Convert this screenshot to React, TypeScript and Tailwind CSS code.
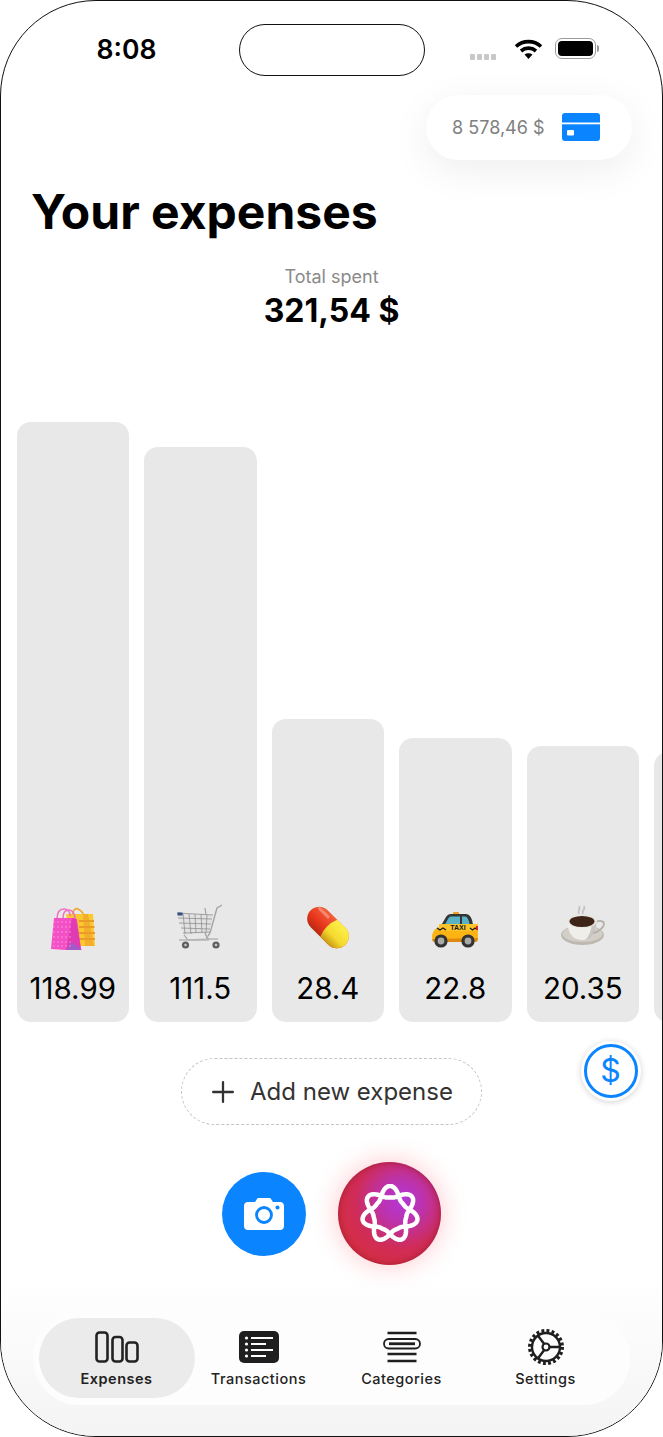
import { Plus } from "lucide-react";

const bars = [
  { value: "118.99", height: 600, icon: <BagsEmoji /> },
  { value: "111.5", height: 575, icon: <CartEmoji /> },
  { value: "28.4", height: 303, icon: <PillEmoji /> },
  { value: "22.8", height: 284, icon: <TaxiEmoji /> },
  { value: "20.35", height: 276, icon: <CoffeeEmoji /> },
  { value: "", height: 270, icon: null },
];

function BagsEmoji() {
  return (
    <svg width="48" height="48" viewBox="0 0 48 48">
      <path d="M23 12c1-7 4-8 6-7s5 3 6 7" fill="none" stroke="#f0a52c" strokeWidth="1.6" />
      <path d="M17 10h27l2 32H22z" fill="#fbc92e" />
      <path d="M34 10h5l6 32h-9z" fill="#f3ae2c" />
      <path d="M30 17h15M30 23h15.500M30 29h16M30 35h16" stroke="#eb9c28" strokeWidth="2" />
      <path d="M8 15c0-8 4-10 7-10s6 2 6 7M14 14c0-6 3-8 6-8s6 3 6 9" fill="none" stroke="#f06ec4" strokeWidth="1.500" />
      <path d="M5 14h19l4 1 4 30-15 1-15-1z" fill="#f450c6" />
      <path d="M23 14l4 1 5 30-15 1z" fill="#e13bb4" />
      <path d="M23 38l-6 8h16z" fill="#a55ac8" />
      <g fill="#fda6e3">
        {[18, 23, 28, 33, 38, 42].flatMap((y) =>
          [5, 9, 13, 17, 21].map((x) => <circle key={`${x}-${y}`} cx={x} cy={y} r="0.7" />)
        )}
      </g>
    </svg>
  );
}

function CartEmoji() {
  return (
    <svg width="48" height="48" viewBox="0 0 48 48" fill="none">
      <path d="M1 9l36 2-3 18-26 2z" fill="#e2e2e2" />
      <g stroke="#8f8f8f" strokeWidth="0.8">
        <path d="M1 9l36 2M2 14l34 1M3 19l32 1M5 24l29 1M7 29l27-1" />
        <path d="M7 9l2 21M13 10l2 20M19 10l1 19M25 10l1 19M31 11l-1 18" />
      </g>
      <rect x="1.500" y="8.500" width="5" height="3" fill="#33507c" />
      <path d="M46 1l-5 3-7 25-2 3" stroke="#a5a5a5" strokeWidth="1.400" />
      <path d="M29 4l1 7M8 31l4 5h20l-3-7M30 31l3 5" stroke="#a0a0a0" strokeWidth="1.200" />
      <path d="M3 36l9 0 23 -1 7 0" stroke="#b5b5b5" strokeWidth="1.600" />
      <circle cx="9.500" cy="41" r="3.600" fill="#5f5f5f" />
      <circle cx="9.500" cy="41" r="1.300" fill="#c8c8c8" />
      <circle cx="40" cy="41" r="3.600" fill="#5f5f5f" />
      <circle cx="40" cy="41" r="1.300" fill="#c8c8c8" />
    </svg>
  );
}

function PillEmoji() {
  return (
    <svg width="48" height="48" viewBox="0 0 48 48">
      <defs>
        <linearGradient id="pillYellow" x1="0" y1="0" x2="0" y2="1">
          <stop offset="0" stopColor="#fdf04a" />
          <stop offset="0.6" stopColor="#f5d92e" />
          <stop offset="1" stopColor="#c99a14" />
        </linearGradient>
        <linearGradient id="pillRed" x1="0" y1="0" x2="0" y2="1">
          <stop offset="0" stopColor="#f2603a" />
          <stop offset="0.6" stopColor="#e8361c" />
          <stop offset="1" stopColor="#b82b12" />
        </linearGradient>
      </defs>
      <g transform="rotate(45 24 23.500)">
        <rect x="-0.500" y="11.500" width="49" height="24" rx="12" fill="url(#pillRed)" />
        <path d="M25 11.500h11.500a12 12 0 0 1 0 24H25q-5-12 0-24z" fill="url(#pillYellow)" />
        <rect x="3" y="14.500" width="15" height="3" rx="1.500" fill="#fff" opacity="0.3" />
      </g>
    </svg>
  );
}

function TaxiEmoji() {
  return (
    <svg width="48" height="48" viewBox="0 0 48 48">
      <rect x="22" y="8" width="6" height="3" rx="1" fill="#e8a21c" />
      <path d="M8 25l7-12c1-2 3-3 5-3h15c3 0 5 3 6 6l2 9z" fill="#353535" />
      <path d="M12 24l5-9c1-2 2-2.500 4-2.500h8V24z" fill="#58b3c6" />
      <path d="M31 12.500h3c2 0 3 2 4 5l1.500 6.500H31z" fill="#58b3c6" />
      <path d="M1 33c0-5 3-9 8-10l35-1c2 0 3 4 3 10 0 3-1 5-3 5H4c-2 0-3-2-3-4z" fill="#fbb413" />
      <path d="M1 35c0 2 1 3 3 3h40c2 0 3-1 3-4z" fill="#e08a0d" />
      <rect x="8" y="20" width="39" height="7" fill="#fbc52a" />
      <text x="27" y="26" textAnchor="middle" fontFamily="Liberation Sans, sans-serif" fontWeight="700" fontSize="7" fill="#1a1a1a">
        TAXI
      </text>
      <path d="M6 24l3 2 3-2 3 2M39 24l2.500 2 2.500-2 2.500 2" stroke="#1a1a1a" strokeWidth="1.200" fill="none" />
      <circle cx="10" cy="37" r="6.600" fill="#333" />
      <circle cx="10" cy="37" r="3.400" fill="#a9a9a9" />
      <circle cx="37" cy="37" r="6.600" fill="#333" />
      <circle cx="37" cy="37" r="3.400" fill="#a9a9a9" />
      <rect x="45" y="22" width="2" height="4" fill="#d22" />
    </svg>
  );
}

function CoffeeEmoji() {
  return (
    <svg width="48" height="48" viewBox="0 0 48 48" fill="none">
      <path d="M20 10c-2-3 2-5 0-8M24 10c-2-3 3-5 1-8" stroke="#c3c3c3" strokeWidth="1.800" />
      <ellipse cx="23.500" cy="31" rx="21.500" ry="10" fill="#bdb9b1" />
      <ellipse cx="23.500" cy="30" rx="20" ry="8" fill="#d3cfc8" />
      <path d="M8.500 17c0 10 4 19 14.500 19s14-9 15-19z" fill="#f0eeea" />
      <path d="M26 36c8-1 11-9 12-19l-5 0c0 8-3 16-7 19z" fill="#c9c6c0" />
      <path d="M37 18c4-2 8-1 8 2s-5 8-11 9" stroke="#b4b1aa" strokeWidth="1.800" />
      <ellipse cx="23" cy="17" rx="15" ry="7" fill="#e8e6e2" />
      <ellipse cx="23" cy="17.500" rx="12.500" ry="5.500" fill="#3f2418" />
    </svg>
  );
}

function Wifi() {
  return (
    <svg width="29" height="22" viewBox="0 0 29 22" fill="none" stroke="#000" strokeWidth="3.600">
      <path d="M2 8.500C9 2 20 2 27 8.500" />
      <path d="M7 13c4.500-3.800 10.500-3.800 15 0" />
      <path d="M14.500 21l-4-4.500c2.300-1.600 5.700-1.600 8 0z" fill="#000" stroke="none" />
    </svg>
  );
}

function Battery() {
  return (
    <div className="flex items-center gap-[1px]">
      <div className="flex h-[21px] w-[41px] items-center justify-center rounded-[7px] border-[1.5px] border-[#9a9a9a] p-[2px]">
        <div className="h-full w-full rounded-[4px] bg-black" />
      </div>
      <div className="h-[7px] w-[2px] rounded-r-full bg-[#9a9a9a]" />
    </div>
  );
}

function CardIcon() {
  return (
    <svg width="38" height="28" viewBox="0 0 38 28">
      <rect width="38" height="28" rx="3" fill="#0a84ff" />
      <rect y="9.500" width="38" height="1.800" fill="#fff" />
      <rect x="5" y="17" width="7" height="5.500" rx="1" fill="#fff" />
    </svg>
  );
}

function CameraIcon() {
  return (
    <svg width="40" height="32" viewBox="0 0 40 32">
      <path
        d="M4 4h7l2-3c.5-.7 1-1 2-1h10c1 0 1.500.3 2 1l2 3h7c2.500 0 4 1.500 4 4v20c0 2.500-1.500 4-4 4H4c-2.500 0-4-1.500-4-4V8c0-2.500 1.500-4 4-4z"
        fill="#fff"
      />
      <circle cx="20" cy="17" r="7.500" fill="none" stroke="#0a84ff" strokeWidth="2.800" />
      <circle cx="33.500" cy="9.500" r="2" fill="#0a84ff" />
    </svg>
  );
}

// rounded {7/2} star, drawn as one closed polar curve
function rosettePath() {
  const points: string[] = [];
  for (let i = 0; i <= 420; i++) {
    const t = (i / 420) * 4 * Math.PI;
    const wave = (Math.cos((7 * t) / 2) + 1) / 2;
    const r = 16.5 + 11.5 * Math.pow(wave, 1.7);
    const a = t - Math.PI / 2;
    points.push(`${(30 + r * Math.cos(a)).toFixed(2)} ${(30 + r * Math.sin(a)).toFixed(2)}`);
  }
  return `M${points.join("L")}Z`;
}

function ExpensesIcon() {
  return (
    <svg width="44" height="32" viewBox="0 0 44 32" fill="none" stroke="#222" strokeWidth="2.600">
      <rect x="1.500" y="1.500" width="11" height="29" rx="3" />
      <rect x="17.500" y="6" width="10" height="24.500" rx="3" />
      <rect x="31.500" y="11.500" width="11" height="19" rx="3" />
    </svg>
  );
}

function TransactionsIcon() {
  return (
    <svg width="40" height="32" viewBox="0 0 40 32">
      <rect width="40" height="32" rx="5" fill="#1f1f1f" />
      <g fill="#fff">
        <circle cx="7.500" cy="7" r="1.600" />
        <circle cx="7.500" cy="13" r="1.600" />
        <circle cx="7.500" cy="19" r="1.600" />
        <circle cx="7.500" cy="25" r="1.600" />
        <rect x="12" y="6" width="22" height="2" />
        <rect x="12" y="12" width="15" height="2" />
        <rect x="12" y="18" width="22" height="2" />
        <rect x="12" y="24" width="15" height="2" />
      </g>
    </svg>
  );
}

function CategoriesIcon() {
  return (
    <svg width="38" height="32" viewBox="0 0 38 32" fill="none" stroke="#1f1f1f">
      <path d="M4.500 2h29M4.500 23h29M4.500 30h29" strokeWidth="2.600" />
      <rect x="1" y="8" width="36" height="9.500" rx="4.750" strokeWidth="1.800" />
      <path d="M6 12.750h26" strokeWidth="2.800" />
    </svg>
  );
}

function SettingsIcon() {
  return (
    <svg width="38" height="38" viewBox="0 0 38 38" fill="none" stroke="#1f1f1f">
      <circle cx="19" cy="19" r="16.300" strokeWidth="3.400" strokeDasharray="2.900 2.220" />
      <circle cx="19" cy="19" r="14" strokeWidth="2.400" />
      <circle cx="19" cy="19" r="3.500" strokeWidth="2.200" />
      <path d="M22.500 19H33M17.200 16 10.500 7M17.200 22 10.500 31" strokeWidth="2.400" />
    </svg>
  );
}

const tabs = [
  { label: "Expenses", icon: <ExpensesIcon />, width: "w-[156px]", active: true },
  { label: "Transactions", icon: <TransactionsIcon />, width: "w-[128px]" },
  { label: "Categories", icon: <CategoriesIcon />, width: "w-[158px]" },
  { label: "Settings", icon: <SettingsIcon />, width: "w-[130px]" },
];

export default function App() {
  return (
    <div className="relative flex h-[1437px] w-[663px] flex-col overflow-hidden rounded-[96px] border-[1.5px] border-[#111] bg-white font-[Inter,sans-serif] text-black">
      {/* STATUS BAR */}
      <div className="mt-[22.5px] flex h-[52px] items-center pl-[95.5px]">
        <span className="w-[142px] text-[26.5px] font-semibold">8:08</span>
        <div className="h-[52px] w-[186px] rounded-full border-[1.5px] border-[#111]" />
        <div className="ml-[45px] flex items-center">
          <div className="mt-[14px] flex gap-[2px]">
            {[0, 1, 2, 3].map((i) => (
              <div key={i} className="h-[6px] w-[5px] rounded-[1px] bg-[#c8c8c8]" />
            ))}
          </div>
          <div className="ml-[18px] mb-[1px]">
            <Wifi />
          </div>
          <div className="ml-[12px] mb-[2px]">
            <Battery />
          </div>
        </div>
      </div>

      {/* BALANCE */}
      <div className="mt-[19px] flex justify-end pr-[30.5px]">
        <div className="flex h-[65px] w-[206px] items-center justify-end gap-[17px] rounded-[33px] bg-white pr-[32px] shadow-[0_10px_40px_rgba(0,0,0,0.07)]">
          <span className="text-[18px] text-[#808080]">8 578,46 $</span>
          <CardIcon />
        </div>
      </div>

      <h1 className="mt-[23px] pl-[30px] text-[48px] leading-[58px] font-bold">Your expenses</h1>

      <div className="mt-[26px] flex flex-col items-center">
        <span className="text-[18px] leading-[20px] text-[#8a8a8a]">Total spent</span>
        <span className="mt-[5px] text-[32px] leading-[38px] font-bold">321,54 $</span>
      </div>

      {/* BARS */}
      <div className="mt-[92.5px] flex h-[600px] items-end gap-[15px] pl-[15.5px]">
        {bars.map((bar, i) => (
          <div
            key={i}
            className="flex w-[112.5px] shrink-0 flex-col items-center justify-end rounded-[14px] bg-[#e8e8e8] pb-[16px]"
            style={{ height: bar.height }}
          >
            {bar.icon}
            {bar.value && <span className="mt-[18px] text-[29.5px] leading-[36px]">{bar.value}</span>}
          </div>
        ))}
      </div>

      {/* ACTIONS */}
      <div className="mt-[36px] flex justify-center">
        <button className="flex h-[67px] w-[301px] items-center justify-center gap-[10px] rounded-full border border-dashed border-[#c4c4c4] pr-[4px] text-[24px] text-[#333]">
          <Plus size={34} strokeWidth={1.6} />
          Add new expense
        </button>
      </div>

      <div className="relative z-10 mt-[37px] flex items-center justify-center gap-[32px]">
        <div className="flex h-[84px] w-[84px] items-center justify-center rounded-full bg-[#0a84ff]">
          <CameraIcon />
        </div>
        <div className="flex h-[103px] w-[103px] items-center justify-center rounded-full bg-[radial-gradient(circle_at_62%_38%,#b436d8_0%,#bb33b0_22%,#d02c58_52%,#d8303f_80%,#e03a48_100%)] shadow-[0_0_26px_rgba(255,50,70,0.28),inset_0_0_7px_rgba(130,15,40,0.65)]">
          <svg width="60" height="60" viewBox="0 0 60 60" fill="none" stroke="#fff" strokeWidth="4.500">
            <path d={rosettePath()} />
          </svg>
        </div>
      </div>

      {/* TAB BAR */}
      <div className="mt-[12px] flex flex-1 flex-col justify-end bg-[linear-gradient(180deg,#ffffff_0%,#f4f4f4_100%)] pb-[31.5px] pl-[31.5px]">
        <nav className="flex h-[93px] w-[597px] items-center rounded-[46px] bg-[#fdfdfd] pl-[6px]">
          {tabs.map((tab) => (
            <div
              key={tab.label}
              className={`flex h-[80px] shrink-0 flex-col items-center justify-end rounded-[40px] pb-[10px] ${tab.width} ${tab.active ? "bg-[#ebebeb]" : ""}`}
            >
              <div className="flex h-[38px] items-center">{tab.icon}</div>
              <span className={`mt-[4px] text-[14.5px] leading-[18px] tracking-[0.5px] text-[#222] ${tab.active ? "font-semibold" : "font-medium"}`}>
                {tab.label}
              </span>
            </div>
          ))}
        </nav>
      </div>

      {/* FLOATING CURRENCY BUTTON */}
      <div className="absolute top-[1039.5px] left-[579.5px] flex h-[60px] w-[60px] items-center justify-center rounded-full bg-white shadow-[0_1px_6px_rgba(0,0,0,0.18)]">
        <div className="flex h-[54px] w-[54px] items-center justify-center rounded-full border-[3px] border-[#0a84ff] text-[32px] text-[#0a84ff]">
          $
        </div>
      </div>
    </div>
  );
}
